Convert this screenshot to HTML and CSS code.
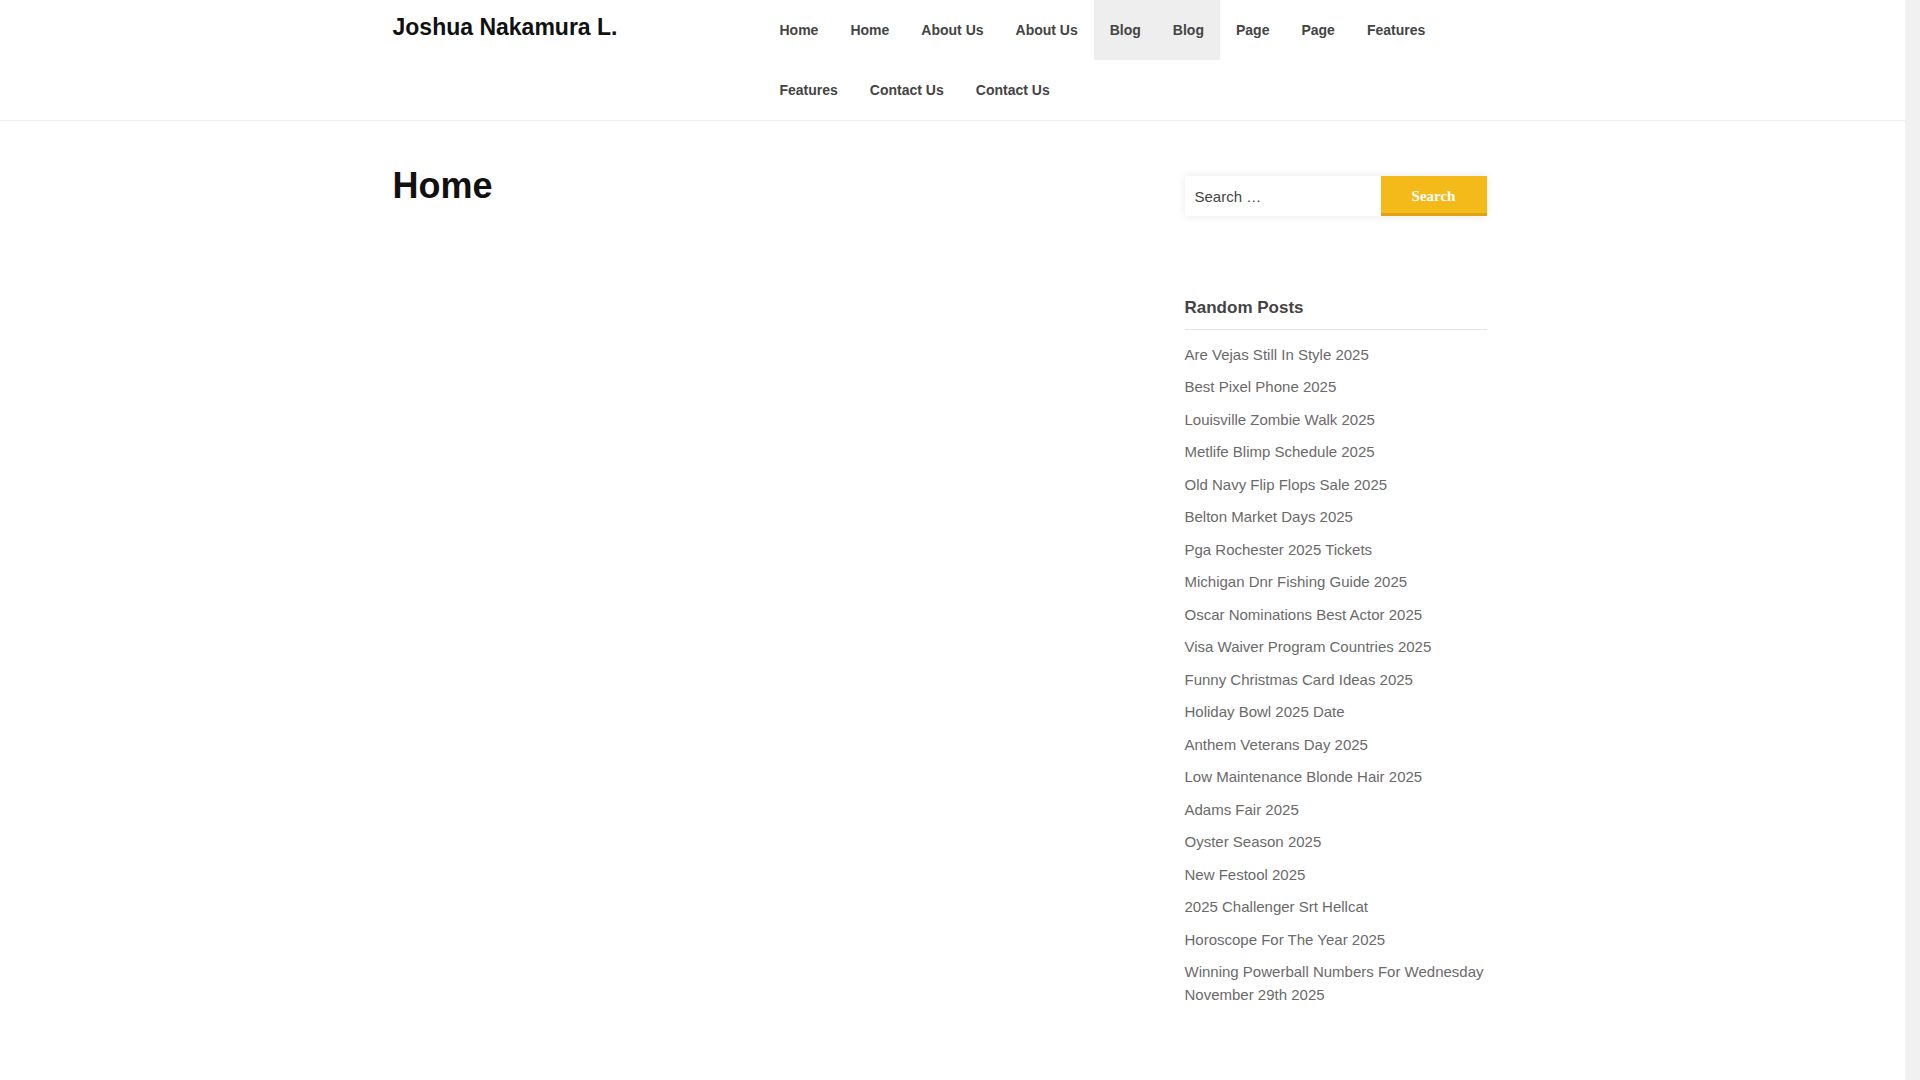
FILE: index.html
```html
<!DOCTYPE html>
<html lang="en">
<head>
<meta charset="utf-8">
<title>Joshua Nakamura L.</title>
<link rel="stylesheet" href="styles.css">
</head>
<body>
<div class="page">
<header class="site-header">
  <div class="container header-inner">
    <div class="branding"><a class="site-title" href="#">Joshua Nakamura L.</a></div>
    <nav class="main-nav">
      <ul class="menu">
        <li><a href="#">Home</a></li>
        <li><a href="#">Home</a></li>
        <li><a href="#">About Us</a></li>
        <li><a href="#">About Us</a></li>
        <li class="current"><a href="#">Blog</a></li>
        <li class="current"><a href="#">Blog</a></li>
        <li><a href="#">Page</a></li>
        <li><a href="#">Page</a></li>
        <li><a href="#">Features</a></li>
        <li><a href="#">Features</a></li>
        <li><a href="#">Contact Us</a></li>
        <li><a href="#">Contact Us</a></li>
      </ul>
    </nav>
  </div>
</header>

<div class="container site-content">
  <main class="content-area">
    <h1 class="page-title">Home</h1>
  </main>
  <aside class="sidebar">
    <form class="search-form">
      <input class="search-field" type="search" placeholder="Search …">
      <button class="search-submit" type="button">Search</button>
    </form>
    <section class="widget">
      <h2 class="widget-title">Random Posts</h2>
      <ul class="post-list">
        <li><a href="#">Are Vejas Still In Style 2025</a></li>
        <li><a href="#">Best Pixel Phone 2025</a></li>
        <li><a href="#">Louisville Zombie Walk 2025</a></li>
        <li><a href="#">Metlife Blimp Schedule 2025</a></li>
        <li><a href="#">Old Navy Flip Flops Sale 2025</a></li>
        <li><a href="#">Belton Market Days 2025</a></li>
        <li><a href="#">Pga Rochester 2025 Tickets</a></li>
        <li><a href="#">Michigan Dnr Fishing Guide 2025</a></li>
        <li><a href="#">Oscar Nominations Best Actor 2025</a></li>
        <li><a href="#">Visa Waiver Program Countries 2025</a></li>
        <li><a href="#">Funny Christmas Card Ideas 2025</a></li>
        <li><a href="#">Holiday Bowl 2025 Date</a></li>
        <li><a href="#">Anthem Veterans Day 2025</a></li>
        <li><a href="#">Low Maintenance Blonde Hair 2025</a></li>
        <li><a href="#">Adams Fair 2025</a></li>
        <li><a href="#">Oyster Season 2025</a></li>
        <li><a href="#">New Festool 2025</a></li>
        <li><a href="#">2025 Challenger Srt Hellcat</a></li>
        <li><a href="#">Horoscope For The Year 2025</a></li>
        <li><a href="#">Winning Powerball Numbers For Wednesday November 29th 2025</a></li>
      </ul>
    </section>
  </aside>
</div>
</div>
<div class="scrollbar" aria-hidden="true"></div>
</body>
</html>
```

FILE: styles.css
```css
body {
  margin: 0;
  background: #fff;
  font-family: "Liberation Sans", Arial, sans-serif;
  color: #444;
}

a {
  text-decoration: none;
}

.page {
  margin-right: 15px;
}

.scrollbar {
  position: fixed;
  top: 0;
  right: 0;
  width: 15px;
  height: 100vh;
  background: #f1f1f1;
}

.container {
  max-width: 1120px;
  margin: 0 auto;
}

/* Header */
.site-header {
  border-bottom: 1px solid #efefef;
  box-shadow: 0 1px 2px rgba(0, 0, 0, 0.03);
}

.header-inner {
  display: grid;
  grid-template-columns: 371px 1fr;
}

.branding {
  padding-top: 9px;
}

.site-title {
  font-size: 23px;
  line-height: 36px;
  font-weight: 700;
  color: #111;
}

.menu {
  list-style: none;
  margin: 0;
  padding: 0;
  display: flex;
  flex-wrap: wrap;
}

.menu li a {
  display: block;
  height: 60px;
  line-height: 60px;
  padding: 0 16px;
  font-size: 14px;
  font-weight: 700;
  color: #444;
}

.menu li.current a {
  background: #eeeeee;
}

/* Content */
.site-content {
  display: grid;
  grid-template-columns: 1fr 302px;
  padding: 43px 26px 60px 0;
  box-sizing: border-box;
}

.page-title {
  margin: 0;
  font-size: 36px;
  line-height: 44px;
  font-weight: 700;
  color: #111;
}

.sidebar {
  padding-top: 12px;
}

.search-form {
  display: flex;
  height: 40px;
  box-shadow: 0 0 10px rgba(0, 0, 0, 0.09);
  border-radius: 3px;
}

.search-field {
  flex: 1;
  min-width: 0;
  border: none;
  outline: none;
  padding: 0 10px;
  font-family: "Liberation Sans", Arial, sans-serif;
  font-size: 15px;
  color: #444;
  background: #fff;
  border-radius: 3px 0 0 3px;
}

.search-field::placeholder {
  color: #444;
  opacity: 1;
}

.search-submit {
  width: 106px;
  border: none;
  border-bottom: 3px solid #dca414;
  background: #f4ba19;
  color: #fff;
  font-family: "Liberation Serif", "Times New Roman", serif;
  font-weight: 700;
  font-size: 15px;
  padding: 3px 0 0;
  cursor: pointer;
}

.widget {
  margin-top: 79px;
}

.widget-title {
  margin: 0 0 9px;
  padding-bottom: 8px;
  border-bottom: 1px solid #e6e6e6;
  font-size: 17px;
  line-height: 25.5px;
  font-weight: 700;
  color: #444;
}

.post-list {
  list-style: none;
  margin: 0;
  padding: 0;
}

.post-list li {
  padding: 5px 0;
  font-size: 15px;
  line-height: 22.5px;
}

.post-list a {
  color: #6a6a6a;
}
```
